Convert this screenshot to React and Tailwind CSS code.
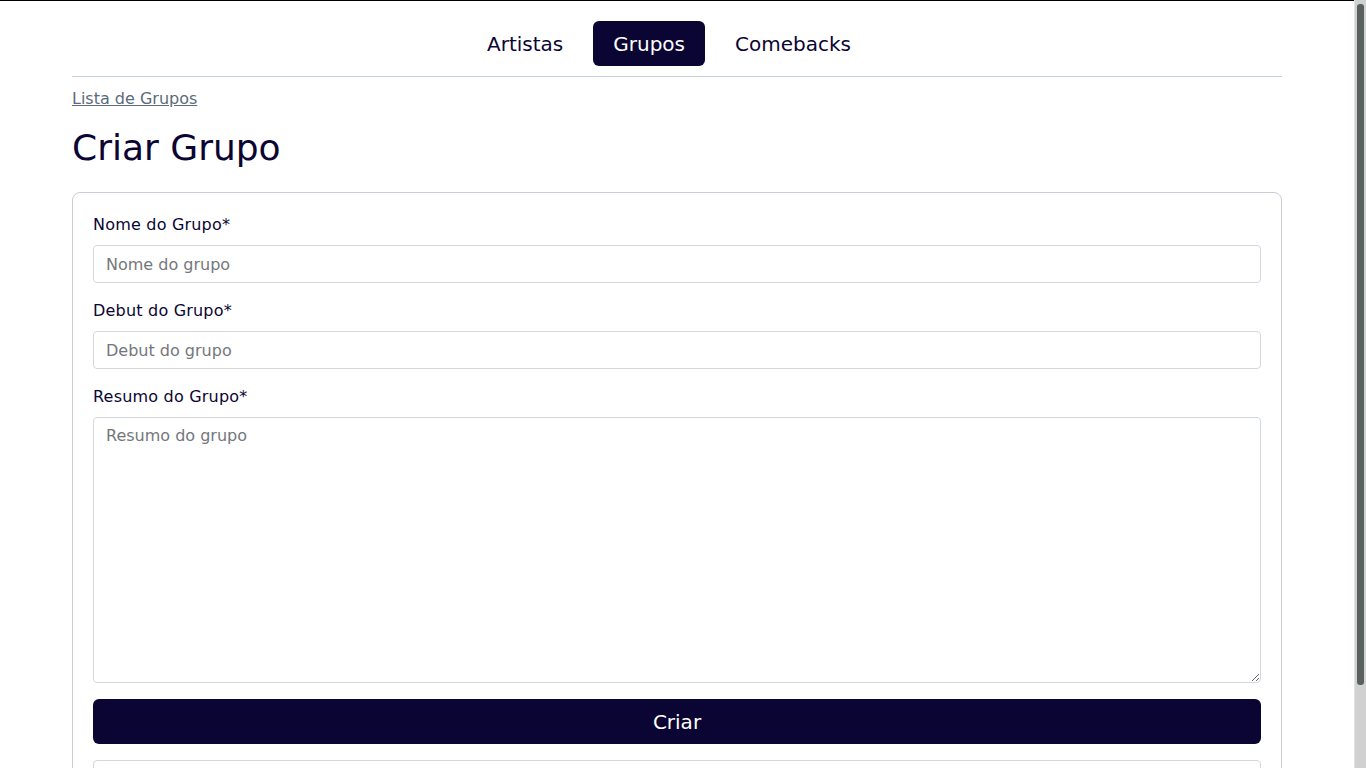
import React, { useState } from 'react';

const tabs = ['Artistas', 'Grupos', 'Comebacks'];

const Field = ({ label, placeholder }) => (
  <div className="mb-4">
    <label className="block mb-2 text-base leading-6 tracking-[0.2px] text-[#0b0533]">{label}</label>
    <input
      type="text"
      placeholder={placeholder}
      className="block w-full h-[38px] px-3 rounded border border-[#d3d8de] text-base text-[#0b0533] placeholder:text-[#74777c] outline-none"
    />
  </div>
);

const App = () => {
  const [active] = useState('Grupos');

  return (
    <div
      className="flex h-screen overflow-hidden bg-white"
      style={{ fontFamily: '"DejaVu Sans", "Noto Sans", sans-serif' }}
    >
      <main className="flex-1 overflow-hidden border-t border-black px-[72px] text-[#0b0533]">
        <nav className="flex justify-center gap-2.5 pt-5 pb-2.5 pr-4 border-b border-[#c6ced6]">
          {tabs.map((t) => (
            <a
              key={t}
              href="#"
              className={`px-5 h-[45px] flex items-center rounded-md text-xl ${
                t === active ? 'bg-[#0b0533] text-white' : 'text-[#0b0533]'
              }`}
            >
              {t}
            </a>
          ))}
        </nav>

        <div className="mt-2.5">
          <a href="#" className="text-base leading-6 text-[#5b6b7b] underline">
            Lista de Grupos
          </a>
        </div>

        <h1 className="mt-3.5 text-[36px] leading-[46px] text-[#0b0533]">Criar Grupo</h1>

        <div className="mt-[21px] border border-[#c8ced5] rounded-lg p-5 pb-2">
          <Field label="Nome do Grupo*" placeholder="Nome do grupo" />
          <Field label="Debut do Grupo*" placeholder="Debut do grupo" />

          <div className="mb-4">
            <label className="block mb-2 text-base leading-6 tracking-[0.2px] text-[#0b0533]">Resumo do Grupo*</label>
            <textarea
              placeholder="Resumo do grupo"
              className="block w-full h-[266px] px-3 py-1.5 rounded border border-[#d3d8de] text-base leading-6 placeholder:text-[#74777c] outline-none"
            />
          </div>

          <button className="w-full h-[45px] rounded-md bg-[#0b0533] text-white text-xl mb-4">Criar</button>

          <div className="h-[60px] rounded border border-[#d3d8de] mb-3" />
        </div>
      </main>

      <aside className="w-[12px] shrink-0 bg-[#d1d1d1] border-l border-[#e2e2e2] pt-1">
        <div className="ml-[2px] w-[7px] h-[681px] rounded-[3px] bg-[#596060]" />
      </aside>
    </div>
  );
};

export default App;
